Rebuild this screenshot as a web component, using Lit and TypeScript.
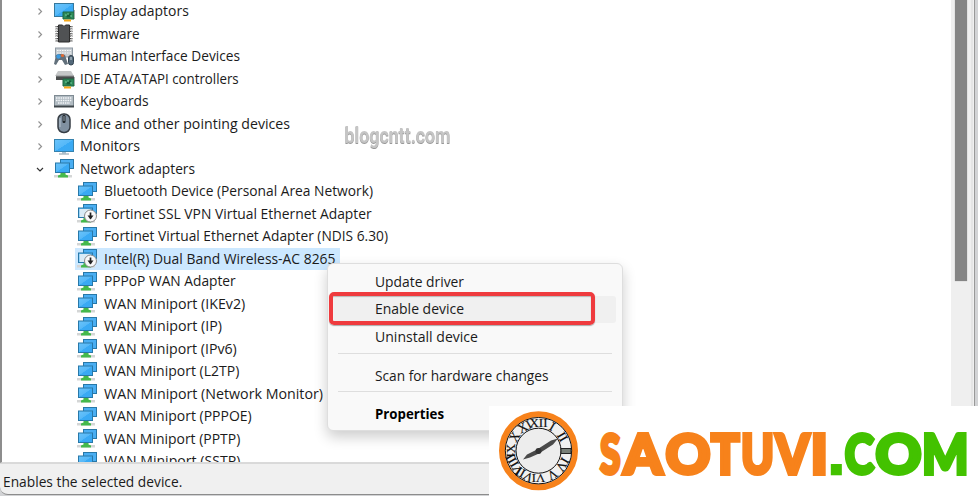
import { LitElement, html, css, svg } from "lit";
import { customElement, property } from "lit/decorators.js";

const chip = svg`<path d="M9 11h11v7H9z" fill="#2f8a5b" stroke="#1c6843"/><path d="M12.500 12.500h4.500v4h-4.500z" fill="#17603c"/><path d="M14 12v2M11 14h2M16 15h2" stroke="#71d39c"/><path d="M10 18.500h7v2h-7z" fill="#f5a91c"/><path d="M20.500 9v8" stroke="#a8b0b0"/>`;
const pair = svg`<rect x="6.500" y="1.500" width="13" height="9" fill="#4aaef2" stroke="#2878a8"/><rect x="1.500" y="5" width="14" height="9.500" fill="url(#scr)" stroke="#2878a8"/>`;
const base = svg`<path d="M0 17h18v2.500H0z" fill="#d4d6d6"/><path d="M6.500 14.500h5v2l2.500 1v2H4v-2l2.500-1z" fill="#45b94c"/>`;

const icons: Record<string, unknown> = {
  display: svg`<rect x=".500" y="2.500" width="19" height="13" fill="url(#scr)" stroke="#35789c"/>${chip}`,
  firmware: svg`<path d="M4.500 2h4l1.500 1.500L11.500 2h4v17h-11z" fill="#505254" stroke="#2c2c2c"/><path d="M3 3v16M17 3v16" stroke="#333" stroke-width="3" stroke-dasharray="1.200 1.200"/><path d="M2.500 3.500v15M17.500 3.500v15" stroke="#dadada" stroke-width="1.500" stroke-dasharray="1.200 1.200"/>`,
  hid: svg`<rect x="1.500" y="2" width="17" height="9" fill="#c6cdd2" stroke="#8f9aa3"/><path d="M3 4.500h14M3 7h14" stroke="#f8fafa" stroke-dasharray="1.500 1"/><path d="M2 9q4-2 9 0l3 9-3 1-3-5H5l-3 5-2-1z" fill="#62707b"/><circle cx="4.500" cy="10.500" r="2.200" fill="#3b9ae0"/><circle cx="8.500" cy="9.500" r="1.600" fill="#e36b32"/><rect x="14.500" y="9.500" width="5" height="9.500" rx="2.500" fill="#526879" stroke="#344450"/><path d="M17 11v3" stroke="#ccd7df"/>`,
  ide: svg`<path d="M4 3h13l3 5H1z" fill="#c5c7c8"/><path d="M2 8h18v4H2z" fill="#4b4d4e"/><path d="M2 8h18" stroke="#919394"/>${chip}`,
  keyboard: svg`<rect x=".500" y="4.500" width="19" height="11" fill="#b1bbc2" stroke="#7f8b93"/><path d="M2 7h16M2 9.500h16M4 12h12" stroke="#f5f8fa" stroke-width="1.300" stroke-dasharray="1.500 .800"/><path d="M0 15.500h20" stroke="#3f464b" stroke-width="2"/>`,
  mouse: svg`<rect x="4" y="1" width="12" height="18.500" rx="5.500" fill="#8090a0" stroke="#363d44" stroke-width="1.500"/><path d="M6 5v9" stroke="#b9c6d1"/><rect x="8.500" y="2" width="3" height="8" rx="1.200" fill="#20262b"/><path d="M10 3v5" stroke="#9ba8b2"/>`,
  monitor: svg`<rect x=".500" y="3.500" width="19" height="12" fill="url(#scr)" stroke="#3682ad"/><path d="M8 16h4v1.500H8z" fill="#a8c1d0"/><path d="M5 18h10" stroke="#8399a6"/>`,
  network: svg`${base}${pair}`,
  disabled: svg`${base}${pair}<path d="M2.500 6h11v8h-11z" fill="#d9ebf6"/><circle cx="13.500" cy="13" r="6" fill="#f8f8f8" stroke="#8a8a8a"/><path d="M13.500 9.500v6" stroke="#222" stroke-width="1.700"/><path d="M10.500 12.500h6l-3 4z" fill="#222"/>`,
};

@customElement("tree-icon")
class TreeIcon extends LitElement {
  @property() name = "network";
  static styles = css`
    :host { display: block; width: 21px; height: 21px; flex: none; }
    svg { display: block; }
  `;
  render() {
    return html`<svg width="21" height="21" viewBox="0 0 21 21">
      <defs><linearGradient id="scr" x2="1" y2="1"><stop stop-color="#6bc4fb" /><stop offset=".5" stop-color="#55b8f8" /><stop offset=".51" stop-color="#39aaf5" /><stop offset="1" stop-color="#3ba8f1" /></linearGradient></defs>
      ${icons[this.name]}
    </svg>`;
  }
}

@customElement("fit-label")
class FitLabel extends LitElement {
  @property() text = "";
  @property({ type: Number }) w = 100;
  @property({ type: Boolean }) bold = false;
  static styles = css`
    :host { display: block; height: 22px; }
    svg { display: block; overflow: visible; }
    text { font-family: "Open Sans", "Noto Sans", sans-serif; font-size: 14.4px; fill: #1b1b1b; }
    .bold { font-weight: 700; fill: #000; }
  `;
  render() {
    return html`<svg width=${this.w} height="22"><text class=${this.bold ? "bold" : ""} x="0" y="16" textLength=${this.w} lengthAdjust="spacingAndGlyphs">${this.text}</text></svg>`;
  }
}

const groups: [string, string, number][] = [
  ["display", "Display adaptors", 108.8],
  ["firmware", "Firmware", 59.5],
  ["hid", "Human Interface Devices", 160],
  ["ide", "IDE ATA/ATAPI controllers", 158.7],
  ["keyboard", "Keyboards", 68.7],
  ["mouse", "Mice and other pointing devices", 210],
  ["monitor", "Monitors", 60],
  ["network", "Network adapters", 115],
];
const devices: [string, string, number][] = [
  ["network", "Bluetooth Device (Personal Area Network)", 269],
  ["disabled", "Fortinet SSL VPN Virtual Ethernet Adapter", 267.7],
  ["network", "Fortinet Virtual Ethernet Adapter (NDIS 6.30)", 284],
  ["disabled", "Intel(R) Dual Band Wireless-AC 8265", 231.5],
  ["network", "PPPoP WAN Adapter", 131.7],
  ["network", "WAN Miniport (IKEv2)", 141.3],
  ["network", "WAN Miniport (IP)", 118],
  ["network", "WAN Miniport (IPv6)", 132.8],
  ["network", "WAN Miniport (L2TP)", 135.3],
  ["network", "WAN Miniport (Network Monitor)", 219],
  ["network", "WAN Miniport (PPPOE)", 147.7],
  ["network", "WAN Miniport (PPTP)", 136.3],
  ["network", "WAN Miniport (SSTP)", 136.3],
];

const orange: [string, number, number][] = [
  ["S", 600, 20.5], ["A", 623.5, 39], ["O", 665.5, 45], ["T", 711, 28.5],
  ["U", 741, 33], ["V", 775.5, 34], ["I", 810.5, 17.5],
];
const green: [string, number, number][] = [
  [".", 828, 16.7], ["C", 844.8, 29.2], ["O", 875.5, 46], ["M", 922, 46.5],
];
const numerals = ["XII", "I", "II", "", "IV", "V", "VI", "VII", "VIII", "IX", "X", "XI"];

@customElement("app-root")
class AppRoot extends LitElement {
  static styles = css`
    :host { display: block; position: relative; width: 978px; height: 496px; overflow: hidden; background: #d2d3d5; }
    .window { box-sizing: border-box; width: 975px; height: 495px; display: flex; flex-direction: column; background: #f0f0f0; border-right: 1px solid #999; border-bottom: 1px solid #8c8c8c; border-radius: 0 0 8px 8px; overflow: hidden; }
    .body { display: flex; height: 463px; }
    .tree { box-sizing: border-box; width: 951px; height: 463px; overflow: hidden; background: #fff; border-left: 2px solid #8d8d8d; border-bottom: 1px solid #dadada; }
    .row { display: flex; align-items: center; height: 22.5px; padding-left: 32px; }
    .arrow { width: 12px; height: 12px; margin-right: 8px; flex: none; fill: none; stroke: #929292; stroke-width: 1.2; }
    .open { stroke: #333; }
    .row fit-label { margin-left: 5px; }
    .child { padding-left: 2px; margin-left: 73px; width: fit-content; padding-right: 4px; }
    .child fit-label { margin-left: 6px; }
    .selected { background: #cce8ff; }
    .scroll { width: 20px; background: #efefef; border-right: 2px solid #e5e5e5; }
    .thumb { width: 12px; height: 281px; margin-left: 4px; background: #858585; box-shadow: 0 0 1px #aaa; }
    .status { flex: 1; padding: 7px 0 0 3px; border-top: 1px solid #d9d9d9; }
    .mark { position: absolute; left: 344px; top: 114px; overflow: visible; }
    .mark text { font: 700 22px Roboto, sans-serif; fill: #c5c5c5; filter: drop-shadow(0 1px 0 #999); }
    .menu { position: absolute; left: 327px; top: 263px; width: 296px; height: 168px; box-sizing: border-box; padding-top: 4px; background: #f9f9f9; border: 1px solid #dedede; border-radius: 6px; box-shadow: 0 6px 14px #0003; }
    .item { display: flex; align-items: center; height: 27.6px; margin: 0 6px; padding-left: 40.6px; border-radius: 3px; }
    .hot { background: #f0f0f0; }
    .rule { height: 1px; margin: 2px 10px 8px; background: #dedede; }
    .focus { position: absolute; left: 329px; top: 292px; width: 266px; height: 33px; box-sizing: border-box; border: 4px solid #ef3b3e; border-radius: 5px; box-shadow: 0 1px 1px #6668, inset 0 1px 1px #6666; }
    .brand { position: absolute; left: 489px; top: 406px; background: #fff; }
    .brand .word { font: 900 56px Lato, sans-serif; stroke-width: 4px; }
    .brand .dot { font: 700 60px "Liberation Sans", sans-serif; stroke-width: 2.5px; }
    .orange { fill: #f7821b; stroke: #f7821b; }
    .green { fill: #43c200; stroke: #43c200; }
    .num { font: 13px "Liberation Serif", serif; fill: #111; stroke: #111; stroke-width: .2px; text-anchor: middle; }
  `;

  letters(list: [string, number, number][], cls: string) {
    return svg`<text class="word ${cls}" y="473.5">${list.map(([c, x, w]) => svg`<tspan class=${c === "." ? "dot" : ""} x=${x} textLength=${w} lengthAdjust="spacingAndGlyphs">${c}</tspan>`)}</text>`;
  }

  render() {
    return html`
      <div class="window">
        <div class="body">
          <div class="tree">
            ${groups.map(([icon, label, w], i) => html`<div class="row">
              <svg class="arrow ${i === 7 ? "open" : ""}" viewBox="0 0 12 12"><path d=${i === 7 ? "M3 5l3 3 3-3" : "M4.500 3.500l3 3-3 3"} /></svg>
              <tree-icon name=${icon}></tree-icon><fit-label text=${label} w=${w}></fit-label>
            </div>`)}
            ${devices.map(([icon, label, w], i) => html`<div class="row child ${i === 3 ? "selected" : ""}">
              <tree-icon name=${icon}></tree-icon><fit-label text=${label} w=${w}></fit-label>
            </div>`)}
          </div>
          <div class="scroll"><div class="thumb"></div></div>
        </div>
        <div class="status"><fit-label text="Enables the selected device." w="179.3"></fit-label></div>
      </div>
      <svg class="mark" width="110" height="38">
        <text x="0.5" y="29" textLength="106" lengthAdjust="spacingAndGlyphs">blogcntt.com</text>
      </svg>
      <div class="menu">
        <div class="item"><fit-label text="Update driver" w="89"></fit-label></div>
        <div class="item hot"><fit-label text="Enable device" w="89"></fit-label></div>
        <div class="item"><fit-label text="Uninstall device" w="103"></fit-label></div>
        <div class="rule"></div>
        <div class="item"><fit-label text="Scan for hardware changes" w="173.5"></fit-label></div>
        <div class="rule"></div>
        <div class="item"><fit-label bold text="Properties" w="69"></fit-label></div>
      </div>
      <div class="focus"></div>
      <svg class="brand" width="489" height="90" viewBox="489 406 489 90">
        <circle cx="538.5" cy="450.700" r="36.500" fill="#f0f0f0" stroke="#f7821b" stroke-width="6" />
        <circle cx="538.5" cy="450.700" r="33.200" fill="none" stroke="#111" stroke-width="1" />
        <circle cx="538.5" cy="450.700" r="22.500" fill="#ededed" stroke="#111" stroke-width="1" />
        ${numerals.map((n, i) => svg`<text class="num" x="538.5" y="427.300" transform="rotate(${i * 30} 538.5 450.700)">${n}</text>`)}
        <path d="M561 448.500h10v5h-10z" fill="#777e77" stroke="#222" />
        <path d="M523 459.500l4-5 10-5 14-9 7-2-5 6-14 9-9 4z" fill="#4a4a4a" />
        <circle cx="538.5" cy="451" r="3" fill="#333" />
        ${this.letters(orange, "orange")}
        ${this.letters(green, "green")}
      </svg>
    `;
  }
}
